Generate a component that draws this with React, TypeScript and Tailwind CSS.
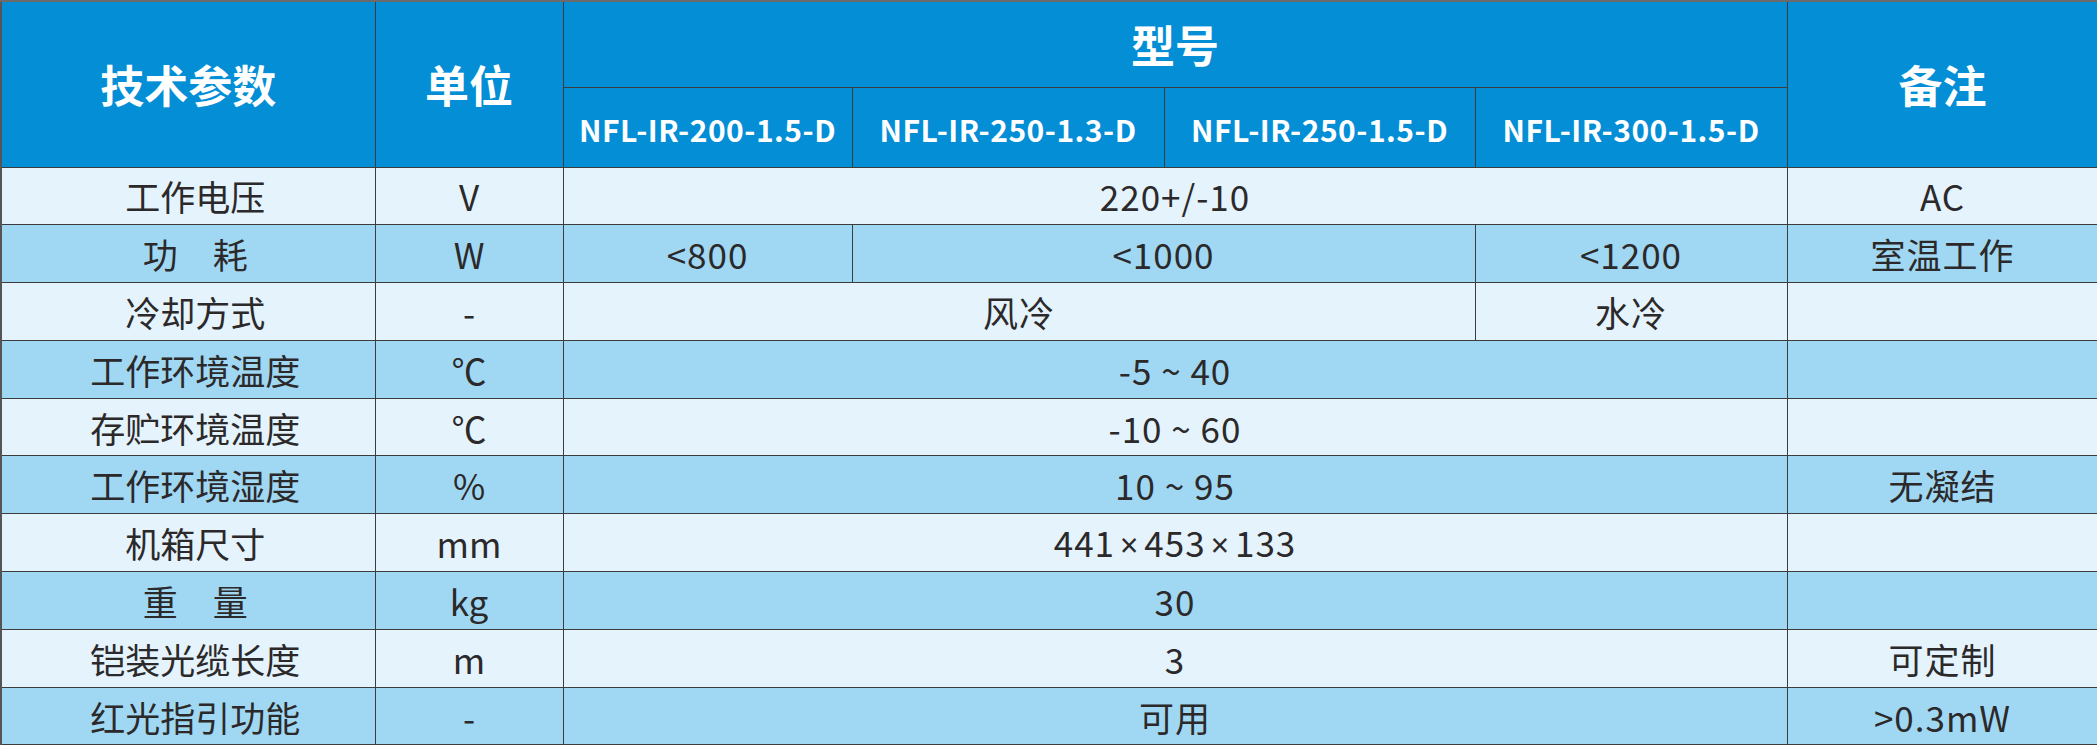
const models = ["NFL-IR-200-1.5-D", "NFL-IR-250-1.3-D", "NFL-IR-250-1.5-D", "NFL-IR-300-1.5-D"];

type Cell = { text: string; span?: number };
type Row = { name: string; unit: string; cells: Cell[]; note: string };

const rows: Row[] = [
  { name: "工作电压", unit: "V", cells: [{ text: "220+/-10", span: 4 }], note: "AC" },
  {
    name: "功　耗",
    unit: "W",
    cells: [{ text: "<800" }, { text: "<1000", span: 2 }, { text: "<1200" }],
    note: "室温工作",
  },
  { name: "冷却方式", unit: "-", cells: [{ text: "风冷", span: 3 }, { text: "水冷" }], note: "" },
  { name: "工作环境温度", unit: "℃", cells: [{ text: "-5 ~ 40", span: 4 }], note: "" },
  { name: "存贮环境温度", unit: "℃", cells: [{ text: "-10 ~ 60", span: 4 }], note: "" },
  { name: "工作环境湿度", unit: "%", cells: [{ text: "10 ~ 95", span: 4 }], note: "无凝结" },
  { name: "机箱尺寸", unit: "mm", cells: [{ text: "441×453×133", span: 4 }], note: "" },
  { name: "重　量", unit: "kg", cells: [{ text: "30", span: 4 }], note: "" },
  { name: "铠装光缆长度", unit: "m", cells: [{ text: "3", span: 4 }], note: "可定制" },
  { name: "红光指引功能", unit: "-", cells: [{ text: "可用", span: 4 }], note: ">0.3mW" },
];

const td = "border border-[#3c3c3c] text-center align-middle p-0";

// the CJK font draws × full width; the reference uses the narrow latin one
function Value({ text }: { text: string }) {
  const parts = text.split("×");
  return (
    <>
      {parts.map((p, i) => (
        <span key={i}>
          {i > 0 && <span className="font-['Noto_Sans',sans-serif] text-[32px] px-[5px]">×</span>}
          {p}
        </span>
      ))}
    </>
  );
}

export default function App() {
  return (
    <div className="w-[2097px] h-[745px] overflow-hidden bg-white font-['Noto_Sans_CJK_SC','Noto_Sans',sans-serif]">
      <table className="w-[2097px] table-fixed border-collapse border-t-2 border-t-[#6b6b6b] border-l-2 border-l-[#555]">
        <colgroup>
          <col className="w-[374px]" />
          <col className="w-[188px]" />
          <col className="w-[289px]" />
          <col className="w-[312px]" />
          <col className="w-[311px]" />
          <col className="w-[312px]" />
          <col className="w-[311px]" />
        </colgroup>
        <thead className="bg-[#038ed6] text-white">
          <tr className="h-[86px]">
            <th rowSpan={2} className={`${td} text-[44px] font-bold`}>
              技术参数
            </th>
            <th rowSpan={2} className={`${td} text-[44px] font-bold`}>
              单位
            </th>
            <th colSpan={4} className={`${td} text-[44px] font-bold`}>
              型号
            </th>
            <th rowSpan={2} className={`${td} text-[44px] font-bold`}>
              备注
            </th>
          </tr>
          <tr className="h-[80px]">
            {models.map((m) => (
              <th key={m} className={`${td} text-[30px] font-bold tracking-[0.5px] pt-[4px]`}>
                {m}
              </th>
            ))}
          </tr>
        </thead>
        <tbody className="text-[35px] text-[#2c292a] leading-none">
          {rows.map((r, i) => (
            <tr key={r.name} className={`h-[57.8px] ${i % 2 === 0 ? "bg-[#e4f3fc]" : "bg-[#a0d8f4]"}`}>
              <td className={`${td} pl-[14px]`}>{r.name}</td>
              <td className={td}>{r.unit}</td>
              {r.cells.map((c, j) => (
                <td key={j} colSpan={c.span ?? 1} className={`${td} tracking-[1px]`}>
                  <Value text={c.text} />
                </td>
              ))}
              <td className={`${td} tracking-[1px]`}>{r.note}</td>
            </tr>
          ))}
        </tbody>
      </table>
    </div>
  );
}
